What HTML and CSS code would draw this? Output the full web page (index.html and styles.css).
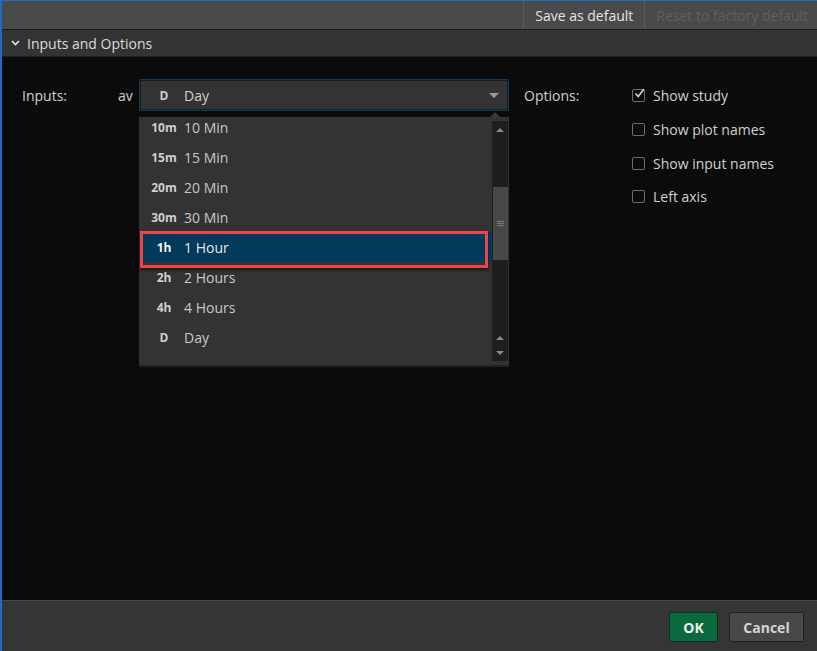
FILE: index.html
```html
<!DOCTYPE html>
<html lang="en">
<head>
    <meta charset="UTF-8">
    <title>Study Properties</title>
    <link rel="stylesheet" href="styles.css">
</head>
<body>
    <div class="dialog">
        <div class="toolbar">
            <button class="tool">Save as default</button>
            <button class="tool" disabled>Reset to factory default</button>
        </div>
        <div class="section-head">
            <svg class="chevron" width="9" height="6" viewBox="0 0 9 6"><path d="M1 1 L4.5 4.5 L8 1" fill="none" stroke="#e6e6e6" stroke-width="1.6"/></svg>
            <span>Inputs and Options</span>
        </div>
        <div class="body">
            <div class="inputs">
                <span class="label">Inputs:</span>
                <span class="name">av</span>
                <div class="picker">
                    <div class="select">
                        <span class="code">D</span>
                        <span class="value">Day</span>
                        <span class="caret"></span>
                    </div>
                    <div class="dropdown">
                        <span class="notch"></span>
                        <ul class="list">
                            <li class="item"><span class="code">10m</span>10 Min</li>
                            <li class="item"><span class="code">15m</span>15 Min</li>
                            <li class="item"><span class="code">20m</span>20 Min</li>
                            <li class="item"><span class="code">30m</span>30 Min</li>
                            <li class="item selected"><span class="code">1h</span>1 Hour</li>
                            <li class="item"><span class="code">2h</span>2 Hours</li>
                            <li class="item"><span class="code">4h</span>4 Hours</li>
                            <li class="item"><span class="code">D</span>Day</li>
                        </ul>
                        <div class="scrollbar">
                            <span class="arrow up top"></span>
                            <div class="thumb"><span class="grip"></span></div>
                            <span class="arrow up bottom"></span>
                            <span class="arrow down"></span>
                        </div>
                        <div class="highlight-box"></div>
                    </div>
                </div>
                <span class="label options-label">Options:</span>
                <ul class="options">
                    <li><span class="check checked"><svg width="11" height="11" viewBox="0 0 11 11"><path d="M1.5 5.5 L4.2 8.5 L9.8 1.2" fill="none" stroke="#d2d2d2" stroke-width="1.7"/></svg></span>Show study</li>
                    <li><span class="check"></span>Show plot names</li>
                    <li><span class="check"></span>Show input names</li>
                    <li><span class="check"></span>Left axis</li>
                </ul>
            </div>
        </div>
        <div class="footer">
            <button class="btn ok">OK</button>
            <button class="btn cancel">Cancel</button>
        </div>
    </div>
</body>
</html>
```
FILE: styles.css
```css
* {
    box-sizing: border-box;
}
body {
    margin: 0;
    background: #0b0b0b;
    font-family: "Open Sans", "Noto Sans", sans-serif;
    font-size: 14px;
    color: #d0d0d0;
}
.dialog {
    width: 817px;
    height: 651px;
    display: flex;
    flex-direction: column;
    border-top: 1px solid #1b6ec2;
    border-left: 2px solid #1b6ec2;
    background: #0b0b0b;
}
.toolbar {
    height: 29px;
    display: flex;
    justify-content: flex-end;
    background: #4a4a4a;
    border-bottom: 1px solid #1d1d1d;
}
.tool {
    font: inherit;
    font-size: 14px;
    color: #e4e4e4;
    background: none;
    border: none;
    border-left: 1px solid #5d5d5d;
    padding: 0 11px 0 11px;
    cursor: pointer;
}
.tool:disabled {
    color: #5f5f5f;
    padding-right: 9px;
    cursor: default;
}
.section-head {
    height: 27px;
    display: flex;
    align-items: center;
    gap: 7px;
    padding-left: 9px;
    background: #333;
    border-bottom: 1px solid #1f1f1f;
    color: #dcdcdc;
}
.body {
    flex: 1;
    padding: 22px 0 0 20px;
}
.inputs {
    display: flex;
    align-items: flex-start;
}
.label, .name {
    line-height: 32px;
    padding-top: 1px;
}
.name {
    margin-left: 51px;
    width: 21px;
}
.picker {
    position: relative;
    width: 370px;
}
.select {
    height: 32px;
    display: flex;
    align-items: center;
    padding-top: 1px;
    background: #333;
    border: 1px solid #0f3b58;
    border-radius: 2px;
    box-shadow: inset 0 0 0 1px #1b1b1b;
}
.code {
    font-weight: bold;
    font-size: 12px;
    text-align: center;
    width: 32px;
    margin-left: 8px;
    margin-right: 4px;
    color: #cfcfcf;
}
.select .value {
    flex: 1;
}
.caret {
    width: 0;
    height: 0;
    border-left: 5px solid transparent;
    border-right: 5px solid transparent;
    border-top: 5px solid #9a9a9a;
    margin-right: 9px;
    margin-top: -1px;
}
.dropdown {
    position: absolute;
    top: 38px;
    left: 0;
    width: 370px;
    height: 250px;
    background: #333;
    border-bottom: 2px solid #222;
    z-index: 2;
}
.notch {
    position: absolute;
    top: -5px;
    right: 9px;
    border-left: 5px solid transparent;
    border-right: 5px solid transparent;
    border-bottom: 5px solid #3a3a3a;
}
.list {
    list-style: none;
    margin: 0;
    padding: 0;
    height: 248px;
    overflow: hidden;
}
.list .item:first-child {
    margin-top: -5px;
}
.item {
    height: 30px;
    display: flex;
    align-items: center;
    padding-top: 1px;
    width: 352px;
    margin-left: 1px;
    color: #c8c8c8;
}
.item .code {
    margin-left: 8px;
}
.item.selected {
    background: #013a5a;
    color: #e8e8e8;
}
.item.selected .code {
    color: #f2f2f2;
}
.scrollbar {
    position: absolute;
    top: 4px;
    right: 1px;
    width: 16px;
    height: 240px;
    background: #1e1e1e;
}
.thumb {
    position: absolute;
    top: 66px;
    left: 1px;
    width: 15px;
    height: 73px;
    background: #484848;
    display: flex;
    align-items: center;
    justify-content: center;
}
.grip {
    width: 7px;
    height: 5px;
    border-top: 1px solid #7a7a7a;
    border-bottom: 1px solid #7a7a7a;
    position: relative;
}
.grip::after {
    content: "";
    position: absolute;
    left: 0;
    right: 0;
    top: 1px;
    border-top: 1px solid #7a7a7a;
}
.arrow {
    position: absolute;
    left: 4px;
    border-left: 4px solid transparent;
    border-right: 4px solid transparent;
}
.arrow.up {
    border-bottom: 4px solid #8a8a8a;
}
.arrow.down {
    border-top: 4px solid #8a8a8a;
    top: 230px;
}
.arrow.top {
    top: 7px;
}
.arrow.bottom {
    top: 215px;
}
.highlight-box {
    position: absolute;
    left: 1px;
    top: 114px;
    width: 348px;
    height: 37px;
    border: 3px solid #e9464a;
    box-shadow: 0 2px 3px rgba(0, 0, 0, 0.55);
}
.options-label {
    margin-left: 15px;
    width: 108px;
}
.options {
    list-style: none;
    margin: 0;
    padding: 0;
}
.options li {
    height: 33.6px;
    display: flex;
    align-items: center;
    gap: 8px;
    color: #d2d2d2;
}
.options li:first-child {
    height: 33px;
    margin-bottom: 1px;
}
.check {
    width: 13px;
    height: 13px;
    border: 1px solid #6e6e6e;
    border-radius: 2px;
    position: relative;
}
.check svg {
    position: absolute;
    left: 1px;
    top: -2px;
}
.footer {
    height: 51px;
    display: flex;
    justify-content: flex-end;
    align-items: flex-start;
    gap: 11px;
    padding: 11px 13px 0 0;
    background: #353535;
    border-top: 1px solid #474747;
}
.btn {
    font: inherit;
    font-weight: bold;
    font-size: 14px;
    height: 30px;
    border-radius: 2px;
    cursor: pointer;
}
.ok {
    width: 49px;
    background: #0b6a3d;
    border: 1px solid #08301c;
    color: #f0f0f0;
}
.cancel {
    width: 75px;
    background: #484848;
    border: 1px solid #1f1f1f;
    color: #d4d4d4;
}
```
